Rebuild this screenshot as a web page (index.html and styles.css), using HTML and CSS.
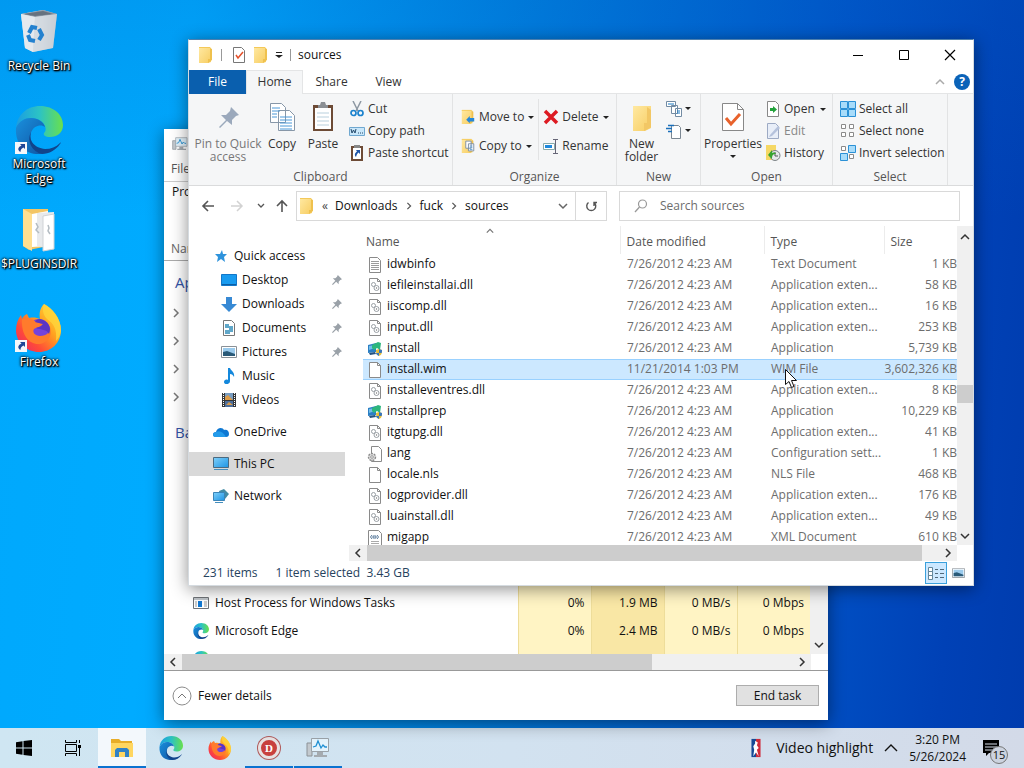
FILE: index.html
```html
<!DOCTYPE html>
<html lang="en">
<head>
  <meta charset="UTF-8">
  <meta name="viewport" content="width=device-width, initial-scale=1.0">
  <title>Desktop</title>
  <link rel="stylesheet" href="styles.css">
</head>
<body>

  <!-- shared icons -->
  <svg class="sprite" aria-hidden="true">
    <defs>
      <linearGradient id="edge-a" x1="0" y1="0" x2="1" y2="0"><stop offset="0" stop-color="#1b9de2"/><stop offset=".5" stop-color="#2cc3c4"/><stop offset="1" stop-color="#6ae04c"/></linearGradient>
      <linearGradient id="edge-b" x1="0" y1="0" x2="1" y2="1"><stop offset="0" stop-color="#1a8fdc"/><stop offset="1" stop-color="#0f55a4"/></linearGradient>
      <linearGradient id="fox-a" x1="1" y1="0" x2="0" y2="1"><stop offset="0" stop-color="#fff04a"/><stop offset=".4" stop-color="#ffa21f"/><stop offset=".7" stop-color="#ff4b38"/><stop offset="1" stop-color="#e9216e"/></linearGradient>
      <linearGradient id="fold" x1="0" y1="0" x2="1" y2="1"><stop offset="0" stop-color="#ffe9a2"/><stop offset="1" stop-color="#f7cd62"/></linearGradient>
      <linearGradient id="screen" x1="0" y1="0" x2="1" y2="1"><stop offset="0" stop-color="#7fd0fa"/><stop offset="1" stop-color="#1d94e4"/></linearGradient>
      <linearGradient id="bin" x1="0" y1="0" x2="1" y2="0"><stop offset="0" stop-color="#e3e9ee"/><stop offset=".6" stop-color="#cbd3db"/><stop offset="1" stop-color="#a3aebb"/></linearGradient>
    </defs>
    <symbol id="edge" viewBox="0 0 48 48">
      <path d="M1 22C2 9 12 0 25 0c14 0 23 9 23 19 0 8-6 12-13 12-5 0-7-2-6-4 2-2 2-4 1-7-2-5-8-8-14-8C9 12 4 16 1 22z" fill="url(#edge-a)"/>
      <path d="M1 22c3-7 9-10 15-10 7 0 13 4 14 9-3-3-12-2-14 6-2 9 4 17 13 20-3 1-5 1-8 1C9 47 0 37 1 22z" fill="url(#edge-b)"/>
      <path d="M16 26c-3 9 4 16 14 17 6 0 11-2 15-6 1-1 1 0 0 1-4 6-11 10-18 10-9-2-16-12-11-22z" fill="#11448b"/>
    </symbol>
    <symbol id="firefox" viewBox="0 0 48 48">
      <path d="M29 0c8 4 17 14 17 26 0 13-10 22-22 22S1 39 1 26c0-6 2-11 5-15l1 4c1-2 2-4 5-5l2 4c5-1 8 0 11 1-1-6 0-11 4-15z" fill="url(#fox-a)"/>
      <circle cx="24" cy="26" r="11" fill="#7543dc"/>
      <path d="M7 15c5-2 10-1 14 3l7 2c-2 4-7 3-9 5-2 3 1 7 6 7 7 0 10-4 10-9 3 9-3 17-12 17S6 31 7 15z" fill="#ff7b2c"/>
      <path d="M25 15c-2 0-4 1-5 3l8 2c-1 2-4 3-7 4 5 2 11 1 13 6 3-7-1-13-9-15z" fill="#5a35c4"/>
      <path d="M29 0c8 5 17 14 17 27-1 4-2 7-5 10 1-12-2-17-9-22-4-4-5-9-3-15z" fill="#ffd53b" opacity=".8"/>
    </symbol>
    <symbol id="folder" viewBox="0 0 16 18"><path d="M1 1h11l1 1v14l-3 1H1z" fill="url(#fold)"/><path d="M12 2l2 1v11l-4 3v-4h2z" fill="#efc14e"/><path d="M1 1h11v1H1z" fill="#f4c95a"/></symbol>
    <symbol id="page" viewBox="0 0 14 16"><path d="M1.500.500h8l3 3v12h-11z" fill="#fff" stroke="#8a8a8a"/><path d="M9.500.500v3h3" fill="none" stroke="#8a8a8a"/></symbol>
    <symbol id="text-file" viewBox="0 0 14 16"><path d="M1.500.500h8l3 3v12h-11z" fill="#fff" stroke="#8a8a8a"/><path d="M3 4.500h8M3 6.500h8M3 8.500h8M3 10.500h8M3 12.500h8" stroke="#9b9b9b"/></symbol>
    <symbol id="dll" viewBox="0 0 14 16"><path d="M1.500.500h8l3 3v12h-11z" fill="#fff" stroke="#8a8a8a"/><path d="M9.500.500v3h3" fill="none" stroke="#8a8a8a"/><circle cx="5.500" cy="6.500" r="2" fill="none" stroke="#9aa0a5"/><circle cx="8.500" cy="10" r="2.500" fill="none" stroke="#9aa0a5"/><circle cx="8.500" cy="10" r=".7" fill="#777"/></symbol>
    <symbol id="ini" viewBox="0 0 16 16"><path d="M4.500.500h7l3 3v12h-10z" fill="#fff" stroke="#8a8a8a"/><circle cx="5" cy="11" r="3.500" fill="#ddd" stroke="#8d8d8d" stroke-width="1.400" stroke-dasharray="2 1"/><circle cx="5" cy="11" r="1.300" fill="#fff" stroke="#999"/></symbol>
    <symbol id="xml" viewBox="0 0 14 16"><path d="M.500.500h10l3 3v12H.500z" fill="#fff" stroke="#8a8a8a"/><path d="M4 5L2.500 7 4 9m5-4l1.500 2L9 9M5 8V6h3v2z" fill="none" stroke="#56789a"/><path d="M3 11.500h8M3 13.500h8" stroke="#aaa"/></symbol>
    <symbol id="setup" viewBox="0 0 16 16"><path d="M1 4l8-2v9l-8 1z" fill="#2b7fc4"/><path d="M2 5l6-1v3L2 9z" fill="#71bdea"/><path d="M5 4l6-3 3 1-1 7-3-2-3 2-2-2z" fill="#2db67d"/><path d="M2 12l6-1 1 2-6 1z" fill="#24527f"/><path d="M9 9l3-1 3 1c0 4-1 5-3 6-2-1-3-2-3-6z" fill="#e6bd35"/><path d="M12 8l3 1c0 2 0 2-.500 3H12zM9 12h3v3c-2-1-3-2-3-3z" fill="#3976bb"/></symbol>
    <symbol id="pin" viewBox="0 0 12 12"><path d="M7 0l5 5-2 1-2 2v3L5 8l-4 4-1-1 4-4-3-3h3l2-2z" fill="#9aa1a8"/></symbol>
    <symbol id="chev-right" viewBox="0 0 10 10"><path d="M3 1l4 4-4 4" fill="none" stroke="currentColor" stroke-width="1.500"/></symbol>
    <symbol id="chev-left" viewBox="0 0 10 10"><path d="M7 1L3 5l4 4" fill="none" stroke="currentColor" stroke-width="1.500"/></symbol>
    <symbol id="chev-up" viewBox="0 0 10 10"><path d="M1 7l4-4 4 4" fill="none" stroke="currentColor" stroke-width="1.500"/></symbol>
    <symbol id="chev-down" viewBox="0 0 10 10"><path d="M1 3l4 4 4-4" fill="none" stroke="currentColor" stroke-width="1.500"/></symbol>
    <symbol id="caret" viewBox="0 0 6 4"><path d="M0 0h6L3 3z" fill="#222"/></symbol>
    <symbol id="shortcut" viewBox="0 0 12 12"><path d="M0 0h12v12H0z" fill="#f5f7fa"/><path d="M5 2h5v5L8.500 5.500C6 7 5.500 8 5.500 10 2 8 3 5 6.500 3.500z" fill="#1f4696"/></symbol>
    <symbol id="taskmgr" viewBox="0 0 24 22"><path d="M1 6h5v13H1z" fill="#c3c9ce" stroke="#8c9297"/><path d="M5.500 1.500h17v13h-17z" fill="#e4f3fc" stroke="#9ba2a8"/><path d="M7 10l3-1 2-5 3 7 2-3 2 2h2" fill="none" stroke="#1f8fd2" stroke-width="1.300"/><path d="M11 15h6v3h-6zM8 18h13v2H8z" fill="#a5abb0"/></symbol>
    <symbol id="picture" viewBox="0 0 16 12"><path d="M.500.500h15v11H.500z" fill="#fff" stroke="#8a9197"/><path d="M2 2h12v8H2z" fill="#9bcbed"/><path d="M2 6l4-1 8 3v2H2z" fill="#2a5a78"/></symbol>
  </svg>

  <main class="desktop">
    <div class="shortcuts">
      <a class="shortcut" href="#">
        <svg class="big-icon" viewBox="0 0 48 48"><path d="M6 6l22-4 14 4-4 34-20 4-8-4z" fill="url(#bin)"/><path d="M6 6l22-4 14 4-22 3z" fill="#8c98a5"/><path d="M9 6l19-3 10 3-18 2z" fill="#66727f"/><path d="M6 6l14 3-2 35-8-4z" fill="#e4e9ee"/><path d="M20 9l22-3-4 34-20 4z" fill="#d5dbe1" opacity=".7"/><g fill="none" stroke="#2381cf" stroke-width="4"><path d="M14 25l3-6 5 1M24 21l3 6-3 5M20 33l-5-1-2-5"/></g></svg>
        <span>Recycle Bin</span>
      </a>
      <a class="shortcut" href="#">
        <span class="art"><svg class="big-icon"><use href="#edge"/></svg><svg class="overlay"><use href="#shortcut"/></svg></span>
        <span>Microsoft<br>Edge</span>
      </a>
      <a class="shortcut" href="#">
        <svg class="big-icon" viewBox="0 0 48 48"><path d="M8 3h25v37l-19 4-6-4z" fill="#f3c564"/><path d="M17 8l16-3v35l-16 1z" fill="#fff"/><path d="M22 7l17-1v37l-17-3z" fill="#e8eaec"/><path d="M28 10l11-2v35l-11 2z" fill="#fff" stroke="#d0d3d6"/><path d="M8 3l9 5v37l-9-5z" fill="#ffdf91"/><path d="M21 17l2 4-2 3 3 3M33 19l1 3-1 3 2 3" fill="none" stroke="#b4bcc2" stroke-width="1.500"/></svg>
        <span>$PLUGINSDIR</span>
      </a>
      <a class="shortcut" href="#">
        <span class="art"><svg class="big-icon"><use href="#firefox"/></svg><svg class="overlay"><use href="#shortcut"/></svg></span>
        <span>Firefox</span>
      </a>
    </div>

    <section class="window taskmgr" aria-label="Task Manager">
      <header class="tm-title"><svg class="icon16"><use href="#taskmgr"/></svg></header>
      <div class="tm-menu">File</div>
      <div class="tm-tabs">Processes</div>
      <div class="tm-head">Name</div>
      <div class="tm-body">
        <div class="tm-list">
          <table class="processes">
            <colgroup><col><col class="num"><col class="num"><col class="num"><col class="num"></colgroup>
            <tr class="group"><td>Apps</td><td></td><td class="hot"></td><td></td><td></td></tr>
            <tr><td><svg class="expand"><use href="#chev-right"/></svg></td><td></td><td class="hot"></td><td></td><td></td></tr>
            <tr><td><svg class="expand"><use href="#chev-right"/></svg></td><td></td><td class="hot"></td><td></td><td></td></tr>
            <tr><td><svg class="expand"><use href="#chev-right"/></svg></td><td></td><td class="hot"></td><td></td><td></td></tr>
            <tr><td><svg class="expand"><use href="#chev-right"/></svg></td><td></td><td class="hot"></td><td></td><td></td></tr>
            <tr class="group"><td>Back</td><td></td><td class="hot"></td><td></td><td></td></tr>
            <tr><td></td><td></td><td class="hot"></td><td></td><td></td></tr>
            <tr><td></td><td></td><td class="hot"></td><td></td><td></td></tr>
            <tr><td></td><td></td><td class="hot"></td><td></td><td></td></tr>
            <tr><td></td><td></td><td class="hot"></td><td></td><td></td></tr>
            <tr><td></td><td></td><td class="hot"></td><td></td><td></td></tr>
            <tr><td class="proc"><svg class="icon16" viewBox="0 0 16 16"><path d="M.500 2.500h15v11H.500z" fill="#fff" stroke="#6f7377"/><path d="M1 3h14v2H1z" fill="#bfc5ca"/><path d="M5 6h4v6H5z" fill="#1379d2"/><path d="M2 7h2M2 9h2M2 11h2M11 7h3M11 9h3M11 11h3" stroke="#999"/></svg>Host Process for Windows Tasks</td><td>0%</td><td class="hot">1.9 MB</td><td>0 MB/s</td><td>0 Mbps</td></tr>
            <tr><td class="proc"><svg class="icon16"><use href="#edge"/></svg>Microsoft Edge</td><td>0%</td><td class="hot">2.4 MB</td><td>0 MB/s</td><td>0 Mbps</td></tr>
            <tr><td class="proc"><svg class="icon16"><use href="#edge"/></svg></td><td></td><td class="hot"></td><td></td><td></td></tr>
          </table>
        </div>
        <div class="vscroll tm-vscroll"><svg class="arrow"><use href="#chev-down"/></svg></div>
      </div>
      <div class="hscroll tm-hscroll">
        <svg class="arrow"><use href="#chev-left"/></svg><div class="track"><div class="thumb"></div></div><svg class="arrow"><use href="#chev-right"/></svg>
      </div>
      <footer class="tm-foot">
        <button class="fewer"><svg viewBox="0 0 20 20"><circle cx="10" cy="10" r="9" fill="none" stroke="#8c8c8c"/><path d="M6 12l4-4 4 4" fill="none" stroke="#777"/></svg>Fewer details</button>
        <button class="end-task">End task</button>
      </footer>
    </section>

    <section class="window explorer" aria-label="sources">
      <header class="titlebar">
        <svg class="icon18"><use href="#folder"/></svg>
        <i class="bar"></i>
        <svg class="icon16" viewBox="0 0 16 16"><path d="M2.500.500h8l3 3v12h-11z" fill="#fff" stroke="#777"/><path d="M5 8l2 3 5-6" fill="none" stroke="#e4502a" stroke-width="1.500"/></svg>
        <svg class="icon18"><use href="#folder"/></svg>
        <svg class="customize" viewBox="0 0 8 8"><path d="M1 1.500h6" stroke="#222"/><path d="M0 4h8L4 7z" fill="#222"/></svg>
        <i class="bar"></i>
        <h1>sources</h1>
        <div class="controls">
          <button aria-label="Minimize"><svg viewBox="0 0 12 12"><path d="M1 6.500h10" stroke="#000"/></svg></button>
          <button aria-label="Maximize"><svg viewBox="0 0 12 12"><path d="M1.500 1.500h9v9h-9z" fill="none" stroke="#000"/></svg></button>
          <button aria-label="Close"><svg viewBox="0 0 12 12"><path d="M1 1l10 10M11 1L1 11" stroke="#000" stroke-width="1.200"/></svg></button>
        </div>
      </header>

      <nav class="tabs">
        <button class="file">File</button>
        <button class="active">Home</button>
        <button>Share</button>
        <button>View</button>
        <svg class="collapse"><use href="#chev-up"/></svg>
        <button class="help" aria-label="Help">?</button>
      </nav>

      <div class="ribbon">
        <div class="group clipboard">
          <div class="tools">
            <button class="large pin-quick"><svg viewBox="0 0 32 32"><path d="M19 6l8 8-3 1-4 4v5l-5-4-7 7-1-1 7-7-5-5h5l4-4z" fill="#9ba9bc"/></svg>Pin to Quick<br>access</button>
            <button class="large copy"><svg viewBox="0 0 32 32"><path d="M4.500 2.500h11l4 4v15h-15zM12.500 9.500h11l5 5v15h-16z" fill="#fff" stroke="#8797a8"/><path d="M6 7h8M6 10h8M6 13h5M6 16h5M14 16h12M14 19h12M14 22h12M14 25h12M14 28h12" stroke="#4a98d8"/></svg>Copy</button>
            <button class="large paste"><svg viewBox="0 0 32 32"><path d="M6 4h20v26H6z" fill="#6d4b36"/><path d="M8 7h16v21H8z" fill="#fff"/><path d="M11 6V4h2l1-3h4l1 3h2v3H11z" fill="#8b8f94"/><path d="M10 12h12M10 16h12M10 20h12M10 24h12" stroke="#b9d0dd"/></svg>Paste</button>
            <div class="stack">
              <button><svg viewBox="0 0 16 16"><path d="M4 0l5 10M12 0L7 10" stroke="#8d98a3" stroke-width="1.500"/><circle cx="4.500" cy="12" r="2.500" fill="none" stroke="#1b82cd" stroke-width="1.700"/><circle cx="11.500" cy="12" r="2.500" fill="none" stroke="#1b82cd" stroke-width="1.700"/></svg>Cut</button>
              <button><svg viewBox="0 0 16 16"><path d="M.500 4.500h15v8H.500z" fill="#c9e7fa" stroke="#70a8d0"/><path d="M2 6l1 4 1.500-3L6 10l1-4M9 10h1M11 10h1M13 10h1" fill="none" stroke="#24496b"/></svg>Copy path</button>
              <button><svg viewBox="0 0 16 16"><path d="M2 1h12v15H2z" fill="#6d4b36"/><path d="M4 3h8v11H4z" fill="#fff"/><path d="M5 0h6v3H5z" fill="#888"/><path d="M7 5h4v4L9.500 7.500C8 9 7.500 10 7 12 5 10 6 8 8 6.500z" fill="#1f56a8"/></svg>Paste shortcut</button>
            </div>
          </div>
          <h2>Clipboard</h2>
        </div>
        <div class="group organize">
          <div class="tools">
            <div class="stack wide">
              <button><svg viewBox="0 0 16 18"><use href="#folder" width="16" height="18"/><path d="M6 12l4-4v2h5v4h-5v2z" fill="#2587d8"/></svg>Move to<svg class="caret"><use href="#caret"/></svg></button>
              <button><svg viewBox="0 0 16 18"><use href="#folder" width="16" height="18"/><path d="M5.500 3.500h6v8h-6zM8.500 6.500h6v8h-6z" fill="#fff" stroke="#758aa0"/><path d="M10 9h3M10 11h3M10 13h3" stroke="#5a9bcf"/></svg>Copy to<svg class="caret"><use href="#caret"/></svg></button>
            </div>
            <div class="stack wide split">
              <button><svg viewBox="0 0 16 16"><path d="M2 2l12 12M14 2L2 14" stroke="#dd1b23" stroke-width="3.500"/></svg>Delete<svg class="caret"><use href="#caret"/></svg></button>
              <button><svg viewBox="0 0 16 16"><path d="M.500 5.500h11v6H.500z" fill="#fff" stroke="#8aa"/><path d="M2 7h7v3H2z" fill="#1d88dc"/><path d="M10 1.500h5M10 15.500h5M12.500 1v15" stroke="#667"/></svg>Rename</button>
            </div>
          </div>
          <h2>Organize</h2>
        </div>
        <div class="group new">
          <div class="tools">
            <button class="large"><svg viewBox="0 0 32 32"><path d="M7 5h18v22l-6 3H7z" fill="url(#fold)"/><path d="M21 6l4 3v17l-7 4v-8h3z" fill="#f2c765"/></svg>New<br>folder</button>
            <div class="stack pair">
              <button aria-label="New item"><svg viewBox="0 0 16 16"><path d="M.500.500h9v5h-9zM5.500 4.500h6v8h-6zM9.500 7.500h6v8h-6z" fill="#fff" stroke="#728ba3"/><path d="M2 3h6M11 10h3M11 12h3" stroke="#1b7ac4"/></svg><svg class="caret"><use href="#caret"/></svg></button>
              <button aria-label="Easy access"><svg viewBox="0 0 16 16"><path d="M5.500 2.500h7l2 2v11h-9z" fill="#fff" stroke="#7b8792"/><path d="M2 2.500h6M0 5.500h6M2 8.500h4" stroke="#1b6fba" stroke-width="1.500"/></svg><svg class="caret"><use href="#caret"/></svg></button>
            </div>
          </div>
          <h2>New</h2>
        </div>
        <div class="group open">
          <div class="tools">
            <button class="large"><svg viewBox="0 0 32 32"><path d="M5.500 2.500h15l6 6v21h-21z" fill="#fff" stroke="#888"/><path d="M20.500 2.500v6h6" fill="none" stroke="#888"/><path d="M9 17l5 6 9-10" fill="none" stroke="#e8622c" stroke-width="3"/></svg>Properties<svg class="caret"><use href="#caret"/></svg></button>
            <div class="stack">
              <button><svg viewBox="0 0 16 16"><path d="M2.500.500h8l3 3v12h-11z" fill="#fff" stroke="#888"/><path d="M5 7h3V5l4 3.500L8 12v-2H5z" fill="#23a23c"/></svg>Open<svg class="caret"><use href="#caret"/></svg></button>
              <button class="off"><svg viewBox="0 0 16 16"><path d="M2.500.500h8l3 3v12h-11z" fill="#e8eef8" stroke="#9daac4"/><path d="M5 12L13 3l2 2-8 8-3 1z" fill="#b5c2dc"/></svg>Edit</button>
              <button><svg viewBox="0 0 16 16"><path d="M1 0h10v15H1z" fill="#f5d865"/><circle cx="10" cy="10.500" r="5" fill="#e6e9ea" stroke="#7c8286"/><path d="M10 7v4h3" fill="none" stroke="#555"/><path d="M3 10l4-5v3c2-1 4 0 4 1-3 0-4 1-4 5z" fill="#37a42f"/></svg>History</button>
            </div>
          </div>
          <h2>Open</h2>
        </div>
        <div class="group select">
          <div class="tools">
            <div class="stack">
              <button><svg viewBox="0 0 16 16"><path d="M.500.500h7v7h-7zM8.500.500h7v7h-7zM.500 8.500h7v7h-7zM8.500 8.500h7v7h-7z" fill="#a8dcfa" stroke="#2b91d6"/></svg>Select all</button>
              <button><svg viewBox="0 0 16 16"><path d="M1.500 1.500h4v4h-4zM9.500 1.500h4v4h-4zM1.500 9.500h4v4h-4zM9.500 9.500h4v4h-4z" fill="#fff" stroke="#8a8a8a"/></svg>Select none</button>
              <button><svg viewBox="0 0 16 16"><path d="M1.500 1.500h4v4h-4zM9.500 9.500h4v4h-4z" fill="#fff" stroke="#8a8a8a"/><path d="M8.500.500h7v7h-7zM.500 8.500h7v7h-7z" fill="#a8dcfa" stroke="#2b91d6"/></svg>Invert selection</button>
            </div>
          </div>
          <h2>Select</h2>
        </div>
      </div>

      <div class="address-row">
        <div class="history">
          <button aria-label="Back"><svg viewBox="0 0 14 14"><path d="M13 7H2M7 2L2 7l5 5" fill="none" stroke="#555" stroke-width="1.600"/></svg></button>
          <button aria-label="Forward"><svg viewBox="0 0 14 14"><path d="M1 7h11M7 2l5 5-5 5" fill="none" stroke="#d2d2d2" stroke-width="1.500"/></svg></button>
          <button class="recent" aria-label="Recent locations"><svg viewBox="0 0 10 10"><path d="M2 3l3 3 3-3" fill="none" stroke="#555" stroke-width="1.300"/></svg></button>
          <button aria-label="Up"><svg viewBox="0 0 14 14"><path d="M7 13V2M2 7l5-5 5 5" fill="none" stroke="#555" stroke-width="1.600"/></svg></button>
        </div>
        <div class="address">
          <svg class="icon18"><use href="#folder"/></svg>
          <span class="more">«</span>
          <a href="#">Downloads</a>
          <svg class="sep"><use href="#chev-right"/></svg>
          <a href="#">fuck</a>
          <svg class="sep"><use href="#chev-right"/></svg>
          <a href="#">sources</a>
          <svg class="drop"><use href="#chev-down"/></svg>
          <button class="refresh" aria-label="Refresh"><svg viewBox="0 0 12 12"><path d="M3.500 2.500A4.500 4.500 0 1 0 9 2.500M9 6V2.500h3" fill="none" stroke="#555" stroke-width="1.400"/></svg></button>
        </div>
        <label class="search">
          <svg viewBox="0 0 14 14"><circle cx="8.500" cy="5" r="4" fill="none" stroke="#999" stroke-width="1.200"/><path d="M5.500 8L1 13" stroke="#999" stroke-width="1.300"/></svg>
          <input type="search" placeholder="Search sources" aria-label="Search sources">
        </label>
      </div>

      <div class="content">
        <nav class="places">
          <a class="top" href="#"><svg viewBox="0 0 16 16"><path d="M9 2l1 4h4l-3 3 1 5-4-3-4 3 1-5-3-3h5z" fill="#2e93dc"/></svg>Quick access</a>
          <a href="#"><svg viewBox="0 0 16 16"><path d="M.500 2.500h15v11H.500z" fill="#189bf0" stroke="#1277c9"/><path d="M1 12.500h14" stroke="#0b5ea5"/></svg>Desktop<svg class="pin"><use href="#pin"/></svg></a>
          <a href="#"><svg viewBox="0 0 16 16"><path d="M5 1h6v7h5l-8 8-8-8h5z" fill="#3789d4"/></svg>Downloads<svg class="pin"><use href="#pin"/></svg></a>
          <a href="#"><svg viewBox="0 0 16 16"><path d="M2.500.500h8l3 3v12h-11z" fill="#fff" stroke="#777"/><path d="M4 5h4M4 7h8M8 9h4M4 11h8M4 13h5" stroke="#2d8ab8" stroke-width="1.300"/></svg>Documents<svg class="pin"><use href="#pin"/></svg></a>
          <a href="#"><svg><use href="#picture"/></svg>Pictures<svg class="pin"><use href="#pin"/></svg></a>
          <a href="#"><svg viewBox="0 0 16 16"><path d="M7 0h2c1 3 5 4 4 9-1-2-2-3-4-3v7c0 4-6 4-6 1 0-2 2-3 4-2z" fill="#1488dc"/></svg>Music</a>
          <a href="#"><svg viewBox="0 0 16 16"><path d="M1 1h14v14H1z" fill="#343638"/><path d="M4 1h8v7H4z" fill="#789cc0"/><path d="M4 9h8v6H4z" fill="#4d6f9c"/><path d="M4 5l3-2 5 5H4zM5 13l3-3 4 3z" fill="#dc9b48"/><path d="M2.500 1v14M13.500 1v14" stroke="#fff" stroke-dasharray="1 1"/></svg>Videos</a>
          <a class="top root" href="#"><svg viewBox="0 0 16 16"><path d="M3 13c-4 0-4-5 0-5 1-5 7-5 8-2 3-1 5 1 5 4 0 2-1 3-3 3z" fill="#0d78d3"/><path d="M3 13c-4 0-4-4 0-5 4-2 7 0 10 5z" fill="#249bea"/></svg>OneDrive</a>
          <a class="top root current" href="#"><svg viewBox="0 0 16 16"><path d="M.500 1.500h15v10H.500z" fill="url(#screen)" stroke="#4b6a80"/><path d="M1 13.500h14" stroke="#458ebd"/></svg>This PC</a>
          <a class="top root" href="#"><svg viewBox="0 0 16 16"><path d="M6 3l5-2 5 5-4 5-5-2z" fill="#438ca5"/><path d="M.500 4.500h11v8H.500z" fill="url(#screen)" stroke="#3b85b8"/><path d="M2 14.500h8" stroke="#458ebd"/></svg>Network</a>
        </nav>

        <div class="pane">
          <div class="files-row">
            <div class="files-clip">
              <table class="files">
                <colgroup><col><col class="date"><col class="type"><col class="size"></colgroup>
                <thead>
                  <tr><th>Name<svg class="sort"><use href="#chev-up"/></svg></th><th>Date modified</th><th>Type</th><th>Size</th></tr>
                </thead>
                <tbody>
                  <tr><td><svg><use href="#text-file"/></svg>idwbinfo</td><td>7/26/2012 4:23 AM</td><td>Text Document</td><td>1 KB</td></tr>
                  <tr><td><svg><use href="#dll"/></svg>iefileinstallai.dll</td><td>7/26/2012 4:23 AM</td><td>Application exten...</td><td>58 KB</td></tr>
                  <tr><td><svg><use href="#dll"/></svg>iiscomp.dll</td><td>7/26/2012 4:23 AM</td><td>Application exten...</td><td>16 KB</td></tr>
                  <tr><td><svg><use href="#dll"/></svg>input.dll</td><td>7/26/2012 4:23 AM</td><td>Application exten...</td><td>253 KB</td></tr>
                  <tr><td><svg><use href="#setup"/></svg>install</td><td>7/26/2012 4:23 AM</td><td>Application</td><td>5,739 KB</td></tr>
                  <tr class="selected"><td><svg><use href="#page"/></svg>install.wim</td><td>11/21/2014 1:03 PM</td><td>WIM File</td><td>3,602,326 KB</td></tr>
                  <tr><td><svg><use href="#dll"/></svg>installeventres.dll</td><td>7/26/2012 4:23 AM</td><td>Application exten...</td><td>8 KB</td></tr>
                  <tr><td><svg><use href="#setup"/></svg>installprep</td><td>7/26/2012 4:23 AM</td><td>Application</td><td>10,229 KB</td></tr>
                  <tr><td><svg><use href="#dll"/></svg>itgtupg.dll</td><td>7/26/2012 4:23 AM</td><td>Application exten...</td><td>41 KB</td></tr>
                  <tr><td><svg><use href="#ini"/></svg>lang</td><td>7/26/2012 4:23 AM</td><td>Configuration sett...</td><td>1 KB</td></tr>
                  <tr><td><svg><use href="#page"/></svg>locale.nls</td><td>7/26/2012 4:23 AM</td><td>NLS File</td><td>468 KB</td></tr>
                  <tr><td><svg><use href="#dll"/></svg>logprovider.dll</td><td>7/26/2012 4:23 AM</td><td>Application exten...</td><td>176 KB</td></tr>
                  <tr><td><svg><use href="#dll"/></svg>luainstall.dll</td><td>7/26/2012 4:23 AM</td><td>Application exten...</td><td>49 KB</td></tr>
                  <tr><td><svg><use href="#xml"/></svg>migapp</td><td>7/26/2012 4:23 AM</td><td>XML Document</td><td>610 KB</td></tr>
                </tbody>
              </table>
            </div>
            <div class="vscroll">
              <svg class="arrow"><use href="#chev-up"/></svg><div class="track"><div class="thumb"></div></div><svg class="arrow"><use href="#chev-down"/></svg>
            </div>
          </div>
          <div class="hscroll">
            <svg class="arrow"><use href="#chev-left"/></svg><div class="track"><div class="thumb"></div></div><svg class="arrow"><use href="#chev-right"/></svg>
          </div>
        </div>
      </div>

      <footer class="status">
        <span>231 items</span>
        <span>1 item selected&nbsp; 3.43 GB</span>
        <div class="views">
          <button class="on" aria-label="Details"><svg viewBox="0 0 16 16"><path d="M.500 2.500h4v12h-4zM1 6.500h3M1 10.500h3" fill="#fff" stroke="#65879b"/><path d="M7 4.500h3M12 4.500h4M7 8.500h3M12 8.500h4M7 12.500h3M12 12.500h4" stroke="#52697a"/></svg></button>
          <button aria-label="Large icons"><svg viewBox="0 0 16 12"><use href="#picture" width="16" height="12"/></svg></button>
        </div>
      </footer>
    </section>

    <svg class="cursor" viewBox="0 0 12 19"><path d="M.500.500v15l3.500-3 2.500 6 2.500-1-2.500-6h5z" fill="#fff" stroke="#111"/></svg>
  </main>

  <footer class="taskbar">
    <button aria-label="Start"><svg class="start" viewBox="0 0 16 16"><path d="M0 2.200l6.500-1v6.300H0zM7.500 1L16 0v7.500H7.500zM0 8.500h6.500v6.300l-6.500-1zM7.500 8.500H16V16l-8.500-1z" fill="#000"/></svg></button>
    <button aria-label="Task View"><svg class="start" viewBox="0 0 16 16"><path d="M.500 0v2.500H11.500V0M.500 16v-2.500H11.500V16M.500 4.500h11v7H.500zM14.500 0v3M14.500 5v11" fill="none" stroke="#000"/><path d="M13 5h3v3h-3z" fill="#000"/></svg></button>
    <button class="running front" aria-label="File Explorer"><svg viewBox="0 0 24 24"><path d="M1 3h8l2 2h11v16H1z" fill="#e8ad28"/><path d="M1 7h22v14H1z" fill="#ffd660"/><path d="M5 21v-7l2-2h10l2 2v7h-4v-5H9v5z" fill="#3182c5"/></svg></button>
    <button aria-label="Microsoft Edge"><svg><use href="#edge"/></svg></button>
    <button aria-label="Firefox"><svg><use href="#firefox"/></svg></button>
    <button class="running" aria-label="D"><span class="disc">D</span></button>
    <button class="running" aria-label="Task Manager"><svg><use href="#taskmgr"/></svg></button>
    <div class="tray">
      <button class="news"><svg viewBox="0 0 10 22"><path d="M0 1h5v20H0z" fill="#174a96"/><path d="M5 1h5v20H5z" fill="#d02b3b"/><path d="M4 3l3 2-1 3 2 3-2 2 2 7-3-4-3 4 1-7-1-4 2-3z" fill="#fff"/></svg>Video highlight</button>
      <button class="hidden-icons" aria-label="Show hidden icons"><svg viewBox="0 0 14 14"><path d="M1 10l6-6 6 6" fill="none" stroke="#111" stroke-width="1.400"/></svg></button>
      <div class="clock">3:20 PM<br>5/26/2024</div>
      <button class="notify" aria-label="Notifications"><svg viewBox="0 0 18 18"><path d="M1 1h16v13H7l-3 3v-3H1z" fill="#000"/><path d="M3 5h12M3 8h12M3 11h8" stroke="#d6dde8"/></svg><span class="count">15</span></button>
    </div>
  </footer>

</body>
</html>
```
FILE: styles.css
```css
* {
  box-sizing: border-box;
}
body {
  font-family: "Open Sans", "Noto Sans", sans-serif;
  font-size: 12px;
  line-height: 16px;
  color: #111;
  margin: 0;
  height: 100vh;
  display: flex;
  flex-direction: column;
  overflow: hidden;
}
button, input {
  font: inherit;
  color: inherit;
  background: none;
  border: 0;
  padding: 0;
  margin: 0;
}
a {
  color: inherit;
  text-decoration: none;
}
h1, h2 {
  font-size: 12px;
  font-weight: normal;
  margin: 0;
}
svg {
  flex: none;
  display: block;
}
table {
  border-collapse: collapse;
  table-layout: fixed;
  width: 100%;
}
th, td {
  padding: 0;
  font-weight: normal;
  text-align: left;
  white-space: nowrap;
}
.sprite {
  position: absolute;
  width: 0;
  height: 0;
}
.icon16 {
  width: 16px;
  height: 16px;
}
.icon18 {
  width: 16px;
  height: 18px;
}

/* desktop */
.desktop {
  flex: 1;
  min-height: 0;
  position: relative;
  background: linear-gradient(180deg, rgba(0, 100, 200, 0.22), rgba(0, 100, 200, 0) 30%), linear-gradient(95deg, #00a8fc 0%, #00abff 18%, #007cdc 50%, #0052c6 78%, #0041b6 92%, #003cae 100%);
}
.shortcuts {
  width: 78px;
  padding-top: 8px;
  display: grid;
  grid-template-rows: 98px 100px 98px 80px;
}
.shortcut {
  display: flex;
  flex-direction: column;
  align-items: center;
  gap: 2px;
  line-height: 15px;
  text-align: center;
  color: #fff;
  text-shadow: 1px 1px 1px #000, 1px 1px 2px #000, 0 0 2px #000, 0 0 3px #000;
}
.big-icon {
  width: 48px;
  height: 48px;
}
.art {
  position: relative;
}
.overlay {
  position: absolute;
  left: 0;
  bottom: 0;
  width: 12px;
  height: 12px;
}
.window {
  position: absolute;
  display: flex;
  flex-direction: column;
  background: #fff;
  box-shadow: 0 3px 16px rgba(0, 0, 0, 0.45);
}

/* task manager */
.taskmgr {
  left: 164px;
  right: 196px;
  top: 129px;
  bottom: 8px;
}
.tm-title {
  padding: 7px 8px;
}
.tm-menu {
  padding: 2px 7px 4px;
  color: #555;
  border-bottom: 1px solid #ccc;
}
.tm-tabs {
  padding: 2px 8px;
  height: 57px;
}
.tm-head {
  padding: 2px 7px 3px;
  color: #666;
  border-bottom: 1px solid #aaa;
}
.tm-body {
  flex: 1;
  min-height: 0;
  display: flex;
}
.tm-list {
  flex: 1;
  overflow: hidden;
}
.processes td {
  height: 28px;
  border-left: 1px solid #eedd9a;
  background: #fff4c4;
  text-align: right;
  padding-right: 6px;
}
.processes td.hot {
  background: #f9e7a5;
}
.processes td:first-child {
  background: #fff;
  border: 0;
  text-align: left;
  padding: 0 0 0 7px;
}
.processes .group td {
  height: 38px;
}
.processes .group td:first-child {
  font-size: 15px;
  padding: 4px 0 0 11px;
  color: #3353a5;
}
.processes td.proc {
  padding-left: 29px;
}
.proc svg {
  display: inline-block;
  vertical-align: middle;
  margin-right: 6px;
}
.num {
  width: 73px;
}
.expand {
  width: 10px;
  height: 10px;
  color: #777;
}
.tm-foot {
  display: flex;
  align-items: center;
  justify-content: space-between;
  height: 50px;
  padding: 0 9px 0 8px;
  border-top: 1px solid #999;
}
.fewer {
  display: flex;
  align-items: center;
  gap: 6px;
}
.fewer svg {
  width: 20px;
  height: 20px;
}
.end-task {
  width: 83px;
  height: 21px;
  background: #e1e1e1;
  border: 1px solid #adadad;
}

/* scrollbars */
.arrow {
  width: 10px;
  height: 10px;
  color: #333;
}
.thumb {
  background: #cdcdcd;
}
.hscroll {
  display: flex;
  align-items: center;
  height: 16px;
  padding: 0 4px;
  gap: 4px;
  background: #f0f0f0;
}
.hscroll .track {
  flex: 1;
  display: flex;
  height: 100%;
}
.hscroll .thumb {
  width: 97%;
}
.tm-hscroll {
  margin-right: 17px;
}
.tm-hscroll .thumb {
  width: 77%;
}
.vscroll {
  width: 16px;
  display: flex;
  flex-direction: column;
  align-items: center;
  padding: 6px 0 4px;
  background: #f0f0f0;
}
.vscroll .track {
  flex: 1;
  width: 100%;
  padding-top: 143px;
}
.vscroll .thumb {
  height: 18px;
}
.tm-vscroll {
  width: 18px;
  justify-content: flex-end;
}

/* explorer */
.explorer {
  left: 188px;
  right: 50px;
  top: 39px;
  border: 1px solid #d5dbe0;
  border-top-color: #4c7fae;
}
.titlebar {
  display: flex;
  align-items: center;
  height: 30px;
  padding-left: 9px;
  gap: 6px;
}
.titlebar .bar {
  width: 1px;
  height: 12px;
  margin: 0 1px;
  background: #999;
}
.titlebar .icon16 {
  margin-left: 2px;
}
.customize {
  width: 8px;
  height: 8px;
}
.controls {
  display: flex;
  margin-left: auto;
}
.controls button {
  width: 46px;
  height: 30px;
  display: flex;
  align-items: center;
  justify-content: center;
}
.controls svg {
  width: 12px;
  height: 12px;
}
.tabs {
  display: flex;
  align-items: center;
  height: 24px;
  padding-right: 3px;
  color: #333;
  border-bottom: 1px solid #e4e5e6;
}
.tabs button {
  height: 24px;
  width: 57px;
}
.tabs .file {
  color: #fff;
  background: #0a5fae;
}
.tabs .active {
  background: #f5f6f7;
  border: 1px solid #e4e5e6;
  border-bottom: 0;
}
.collapse {
  width: 10px;
  height: 10px;
  margin-left: auto;
  color: #aaa;
}
.tabs .help {
  width: 16px;
  height: 16px;
  margin-left: 9px;
  border-radius: 50%;
  font-weight: bold;
  color: #fff;
  background: #0b63b8;
}
.ribbon {
  display: flex;
  height: 92px;
  color: #333;
  background: #f5f6f7;
  border-bottom: 1px solid #dadbdc;
}
.ribbon .group {
  display: flex;
  flex-direction: column;
  padding-top: 5px;
  border-right: 1px solid #e2e3e4;
}
.ribbon h2 {
  text-align: center;
  color: #555;
}
.tools {
  flex: 1;
  display: flex;
  align-items: flex-start;
}
.clipboard {
  width: 264px;
}
.organize {
  width: 164px;
}
.new {
  width: 84px;
}
.open {
  width: 132px;
}
.select {
  width: 115px;
}
.tools button {
  display: flex;
  align-items: center;
  white-space: nowrap;
}
.tools .large {
  flex-direction: column;
  width: 40px;
  line-height: 13px;
}
.large svg {
  width: 32px;
  height: 32px;
  margin: 2px 0 4px;
}
.tools .caret {
  width: 6px;
  height: 4px;
  margin: 1px 0 0 2px;
}
.tools .large .caret {
  margin: 5px 0 0;
}
.tools .pin-quick {
  width: 78px;
  color: #777;
}
.tools .copy {
  width: 30px;
}
.tools .paste {
  width: 52px;
}
.stack {
  display: flex;
  flex-direction: column;
  gap: 6px;
  padding-top: 2px;
}
.stack button {
  height: 16px;
  gap: 3px;
}
.stack svg {
  width: 16px;
  height: 16px;
}
.wide {
  gap: 13px;
  padding: 10px 0 6px 7px;
}
.split {
  padding-left: 4px;
  margin-left: 4px;
  border-left: 1px solid #e2e3e4;
}
.tools .wide .caret {
  margin-left: 1px;
}
.new .large {
  width: 49px;
}
.tools .pair .caret {
  margin: 0;
}
.open .large {
  width: 64px;
}
.off {
  color: #888;
}
.select .stack {
  padding-left: 7px;
}

/* address row */
.address-row {
  display: flex;
  height: 40px;
  padding: 5px 13px 5px 0;
}
.history {
  display: flex;
  align-items: center;
  width: 107px;
  padding-left: 12px;
  gap: 15px;
}
.history svg {
  width: 14px;
  height: 14px;
}
.history .recent {
  margin: 0 -6px 0 -3px;
}
.history .recent svg {
  width: 10px;
}
.address {
  flex: 17;
  display: flex;
  align-items: center;
  gap: 7px;
  padding-left: 2px;
  border: 1px solid #d9d9d9;
}
.more {
  color: #444;
}
.sep {
  width: 8px;
  height: 8px;
  color: #555;
}
.drop {
  width: 10px;
  height: 10px;
  margin-left: auto;
  color: #666;
}
.refresh {
  align-self: stretch;
  width: 31px;
  display: flex;
  align-items: center;
  justify-content: center;
  border-left: 1px solid #d9d9d9;
}
.refresh svg {
  width: 12px;
  height: 12px;
}
.search {
  flex: 18;
  display: flex;
  align-items: center;
  gap: 12px;
  margin-left: 12px;
  padding-left: 14px;
  border: 1px solid #d9d9d9;
}
.search svg {
  width: 14px;
  height: 14px;
}
.search input {
  flex: 1;
  min-width: 0;
  outline: 0;
}
.search input::placeholder {
  color: #6d6d6d;
}

/* folder tree and list */
.content {
  display: flex;
}
.places {
  width: 156px;
  padding-top: 18px;
}
.places a {
  display: flex;
  align-items: center;
  gap: 5px;
  height: 24px;
  padding-left: 32px;
}
.places .top {
  padding-left: 24px;
}
.places svg {
  width: 16px;
  height: 16px;
}
.places .pin {
  width: 10px;
  height: 10px;
  margin: 0 3px 0 auto;
}
.places .root {
  margin-top: 8px;
}
.places .current {
  background: #d9d9d9;
}
.pane {
  flex: 1;
  min-width: 0;
  padding-left: 4px;
}
.files-row {
  display: flex;
  height: 319px;
}
.files-clip {
  flex: 1;
  overflow: hidden;
  padding-left: 14px;
}
.date {
  width: 144px;
}
.type {
  width: 120px;
}
.size {
  width: 73px;
}
.files th {
  height: 28px;
  padding: 3px 0 0 6px;
  color: #555;
  border-right: 1px solid #ececec;
}
.files th:first-child {
  padding-left: 3px;
  position: relative;
}
.files th:last-child {
  border: 0;
}
.sort {
  position: absolute;
  left: 48%;
  top: 1px;
  width: 8px;
  height: 8px;
  color: #777;
}
.files td {
  height: 21px;
  line-height: 20px;
  vertical-align: top;
  padding-left: 7px;
  color: #6d6d6d;
}
.files td:first-child {
  padding-left: 4px;
  color: #111;
}
.files td:last-child {
  padding-left: 0;
  text-align: right;
}
.files td svg {
  display: inline-block;
  vertical-align: middle;
  width: 16px;
  height: 16px;
  margin-right: 4px;
}
.selected td {
  background: #cce8ff;
  box-shadow: inset 0 1px #99d1ff, inset 0 -1px #99d1ff;
}
.pane .hscroll {
  margin-right: 16px;
}
.status {
  display: flex;
  align-items: center;
  gap: 18px;
  height: 24px;
  padding: 0 4px 0 14px;
  color: #26425e;
}
.views {
  display: flex;
  margin-left: auto;
}
.views button {
  width: 22px;
  height: 22px;
  display: flex;
  align-items: center;
  justify-content: center;
}
.views .on {
  background: #cce8ff;
  border: 1px solid #3aa0dc;
}
.views svg {
  width: 16px;
  height: 16px;
}
.views button:last-child svg {
  width: 13px;
}
.cursor {
  position: absolute;
  left: 785px;
  top: 369px;
  width: 12px;
  height: 19px;
}

/* taskbar */
.taskbar {
  display: flex;
  gap: 1px;
  height: 40px;
  background: linear-gradient(90deg, #cfe6f2, #d2e2f0 50%, #d3dae8);
}
.taskbar button {
  width: 48px;
  display: flex;
  align-items: center;
  justify-content: center;
}
.taskbar svg {
  width: 24px;
  height: 24px;
}
.taskbar .start {
  width: 16px;
  height: 16px;
}
.taskbar .running {
  border-bottom: 2px solid #0a72d0;
  padding-top: 2px;
}
.taskbar .front {
  background: #f3f8fc;
}
.disc {
  width: 22px;
  height: 22px;
  border: 3px solid #e7e2e3;
  border-radius: 50%;
  font: bold 11px/16px "Liberation Serif", serif;
  color: #fff;
  background: #c8403e;
  box-shadow: 0 0 0 1px #b05a5a;
}
.tray {
  display: flex;
  align-items: center;
  margin-left: auto;
  padding-right: 8px;
}
.tray .news {
  width: auto;
  gap: 15px;
  font-size: 14px;
}
.news svg {
  width: 10px;
  height: 20px;
}
.tray .hidden-icons {
  width: 36px;
}
.tray .hidden-icons svg {
  width: 14px;
  height: 14px;
}
.clock {
  text-align: center;
  line-height: 17px;
}
.tray .notify {
  position: relative;
  width: 50px;
  height: 40px;
}
.notify svg {
  width: 18px;
  height: 18px;
}
.count {
  position: absolute;
  right: 8px;
  bottom: 4px;
  width: 18px;
  height: 18px;
  line-height: 16px;
  font-size: 11px;
  border: 1px solid #777;
  border-radius: 50%;
  background: #ccd3df;
}
```
